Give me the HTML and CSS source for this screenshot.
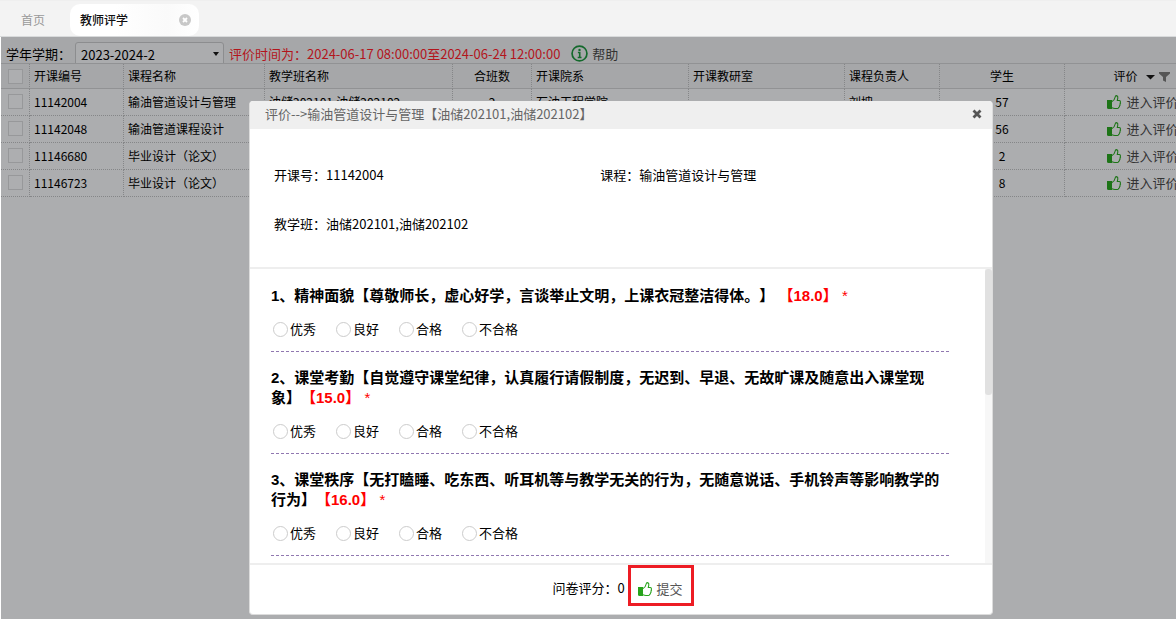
FILE: index.html
```html
<!DOCTYPE html>
<html lang="zh-CN">
<head>
<meta charset="utf-8">
<title>教师评学</title>
<link rel="stylesheet" href="styles.css">
</head>
<body>
<svg class="defs" aria-hidden="true">
  <symbol id="thumb" viewBox="0 0 16 16">
    <path d="M1 6h5v9H2.500Q1 15 1 13.500z" fill="currentColor"/>
    <path d="M6 7.500Q8.500 6.300 9 3.500Q9.300 1.600 10.500 1.600Q12.200 2 11.800 4L11.300 6.500H13.200Q14.700 6.700 14.300 8.300Q14.900 9.300 14 10Q14.400 11.300 13.500 12Q13.500 13.200 12.600 13.600Q12.300 14.500 11.200 14.500H9Q7.500 14.500 6 13.800" fill="none" stroke="currentColor" stroke-width="1.100"/>
  </symbol>
</svg>
<nav class="tabs">
  <a class="tab" href="#">首页</a>
  <a class="tab active" href="#">教师评学
    <svg class="tab-close" viewBox="0 0 12 12"><circle cx="6" cy="6" r="6" fill="#c8c8c8"/><path d="M4 4l4 4M8 4l-4 4" stroke="#fff" stroke-width="1.800"/></svg>
  </a>
</nav>
<main class="page">
  <div class="toolbar">
    <label for="term">学年学期：</label>
    <span class="select-wrap"><select id="term"><option>2023-2024-2</option></select></span>
    <span class="period">评价时间为：2024-06-17 08:00:00至2024-06-24 12:00:00</span>
    <button class="help" type="button">
      <svg viewBox="0 0 16 16"><circle cx="8" cy="8" r="7" fill="none" stroke="currentColor" stroke-width="1.600"/><circle cx="8" cy="4.600" r="1.100" fill="currentColor"/><path d="M6.500 7h1.700v4.600M6.300 11.700h3.600" fill="none" stroke="currentColor" stroke-width="1.500"/></svg>帮助
    </button>
  </div>
  <table class="grid">
    <colgroup><col class="c-check"><col class="c-code"><col class="c-course"><col class="c-class"><col class="c-count"><col class="c-dept"><col class="c-room"><col class="c-owner"><col class="c-student"><col class="c-action"></colgroup>
    <thead>
      <tr><th><input type="checkbox" aria-label="全选"></th><th>开课编号</th><th>课程名称</th><th>教学班名称</th><th class="mid">合班数</th><th>开课院系</th><th>开课教研室</th><th>课程负责人</th><th class="mid">学生</th><th class="mid">评价<svg class="sort" viewBox="0 0 26 12"><path d="M0 4h9L4.500 8.500z" fill="#111"/><path d="M13 1h11v1.500L20 6v5l-3-1.500V6l-4-3.500z" fill="#555"/></svg></th></tr>
    </thead>
    <tbody>
      <tr><td><input type="checkbox" aria-label="选择"></td><td>11142004</td><td>输油管道设计与管理</td><td>油储202101,油储202102</td><td class="mid">2</td><td>石油工程学院</td><td></td><td>刘坤</td><td class="mid">57</td><td class="mid"><button class="rate" type="button"><svg><use href="#thumb"/></svg>进入评价</button></td></tr>
      <tr><td><input type="checkbox" aria-label="选择"></td><td>11142048</td><td>输油管道课程设计</td><td></td><td></td><td></td><td></td><td></td><td class="mid">56</td><td class="mid"><button class="rate" type="button"><svg><use href="#thumb"/></svg>进入评价</button></td></tr>
      <tr><td><input type="checkbox" aria-label="选择"></td><td>11146680</td><td>毕业设计（论文）</td><td></td><td></td><td></td><td></td><td></td><td class="mid">2</td><td class="mid"><button class="rate" type="button"><svg><use href="#thumb"/></svg>进入评价</button></td></tr>
      <tr><td><input type="checkbox" aria-label="选择"></td><td>11146723</td><td>毕业设计（论文）</td><td></td><td></td><td></td><td></td><td></td><td class="mid">8</td><td class="mid"><button class="rate" type="button"><svg><use href="#thumb"/></svg>进入评价</button></td></tr>
    </tbody>
  </table>
</main>

<section class="dialog" role="dialog" aria-labelledby="dlg-title">
  <header class="dialog-head">
    <span id="dlg-title">评价--&gt;输油管道设计与管理【油储202101,油储202102】</span>
    <button class="close" type="button" aria-label="关闭"><svg viewBox="0 0 10 10"><path d="M1.500 1.500l7 7M8.500 1.500l-7 7" stroke="#555" stroke-width="2.800"/></svg></button>
  </header>
  <div class="info">
    <span>开课号：11142004</span>
    <span>课程：输油管道设计与管理</span>
    <span>教学班：油储202101,油储202102</span>
  </div>
  <div class="body">
    <form class="questions">
      <fieldset class="question">
        <legend>1、精神面貌【尊敬师长，虚心好学，言谈举止文明，上课衣冠整洁得体。】 <span class="score">【18.0】</span> <span class="star">*</span></legend>
        <div class="options"><label><input type="radio" name="q1">优秀</label><label><input type="radio" name="q1">良好</label><label><input type="radio" name="q1">合格</label><label><input type="radio" name="q1">不合格</label></div>
      </fieldset>
      <fieldset class="question">
        <legend>2、课堂考勤【自觉遵守课堂纪律，认真履行请假制度，无迟到、早退、无故旷课及随意出入课堂现象】<span class="score">【15.0】</span> <span class="star">*</span></legend>
        <div class="options"><label><input type="radio" name="q2">优秀</label><label><input type="radio" name="q2">良好</label><label><input type="radio" name="q2">合格</label><label><input type="radio" name="q2">不合格</label></div>
      </fieldset>
      <fieldset class="question">
        <legend>3、课堂秩序【无打瞌睡、吃东西、听耳机等与教学无关的行为，无随意说话、手机铃声等影响教学的行为】<span class="score">【16.0】</span> <span class="star">*</span></legend>
        <div class="options"><label><input type="radio" name="q3">优秀</label><label><input type="radio" name="q3">良好</label><label><input type="radio" name="q3">合格</label><label><input type="radio" name="q3">不合格</label></div>
      </fieldset>
    </form>
    <div class="track"><div class="thumb"></div></div>
  </div>
  <footer class="dialog-foot">
    <span class="total">问卷评分：0</span>
    <button class="submit" type="button"><svg><use href="#thumb"/></svg>提交</button>
  </footer>
</section>
</body>
</html>
```
FILE: styles.css
```css
* { box-sizing: border-box; }
body {
  margin: 0;
  height: 100vh;
  display: flex;
  flex-direction: column;
  overflow: hidden;
  background: #fff;
  color: #000;
  font: 13px/20px "Noto Sans CJK SC", sans-serif;
  text-spacing-trim: space-all;
}
button, select, input { font: inherit; color: inherit; margin: 0; }
button { border: 0; padding: 0; background: none; display: inline-flex; align-items: center; }
.defs { position: absolute; width: 0; height: 0; }

.tabs {
  flex: none;
  height: 37px;
  padding-top: 3px;
  display: flex;
  background: #f3f3f3;
  border-top: 1px solid #efefef;
  border-bottom: 1px solid #d8dadb;
  font-size: 12px;
}
.tab {
  height: 32px;
  padding: 0 8px 0 21px;
  width: 70px;
  display: flex;
  align-items: center;
  color: #999;
  text-decoration: none;
}
.tab.active {
  width: 129px;
  padding-left: 10px;
  justify-content: space-between;
  color: #111;
  font-weight: 500;
  border-radius: 10px;
  background: linear-gradient(90deg, #fff 35%, #fafafa 75%, #fff);
}
.tab-close { width: 12px; height: 12px; }

.page { flex: 1; margin-left: 1px; background: #acadaf; overflow: hidden; }
.toolbar {
  height: 27px;
  padding: 5px 0 0 5px;
  display: flex;
  align-items: flex-start;
  line-height: 24px;
  background: #a6a7a9;
  border-bottom: 1px solid #919294;
  overflow: hidden;
}
.toolbar label { width: 69px; }
.select-wrap { position: relative; width: 149px; margin-right: 5px; }
.select-wrap::after {
  content: "";
  position: absolute;
  right: 5px;
  top: 10px;
  border: 3px solid transparent;
  border-top: 4px solid #111;
  border-bottom: 0;
}
select {
  appearance: none;
  width: 100%;
  height: 24px;
  padding: 0 5px 3px;
  border: 1px solid #8c8d8f;
  border-radius: 3px;
  background: #abacae;
  display: block;
}
.period { color: #b3151c; white-space: nowrap; }
.help { height: 24px; margin-left: 11px; padding-bottom: 1px; gap: 4px; color: #333; }
.help svg { width: 17px; height: 17px; color: #14692c; }

.grid { width: 1220px; table-layout: fixed; border-collapse: separate; border-spacing: 0; font-size: 12px; line-height: 16px; }
.c-check { width: 29px; }
.c-code { width: 94px; }
.c-course { width: 141px; }
.c-class { width: 188px; }
.c-count { width: 79px; }
.c-dept { width: 157px; }
.c-room { width: 156px; }
.c-owner { width: 95px; }
.c-student { width: 125px; }
.c-action { width: 156px; }
.grid th, .grid td {
  padding: 0 4px;
  text-align: left;
  font-weight: 400;
  white-space: nowrap;
  border-right: 1px dotted #858688;
  border-bottom: 1px dotted #858688;
}
.grid th { height: 25px; background: #a6a7a9; border-bottom: 1px solid #919294; }
.grid td { height: 27px; padding-bottom: 1px; }
.grid .mid { text-align: center; }
.grid input {
  appearance: none;
  display: block;
  width: 15px;
  height: 15px;
  margin-left: 3px;
  border: 1px solid #97989a;
  background: #adaeb0;
}
.sort { width: 26px; height: 12px; margin-left: 8px; vertical-align: -2px; }
.rate { gap: 4px; color: #333; font-size: 13px; vertical-align: middle; }
.rate svg { width: 16px; height: 16px; color: #1d7417; }

.dialog {
  position: absolute;
  top: 101px;
  right: 183px;
  bottom: 4px;
  left: 249px;
  display: flex;
  flex-direction: column;
  border: 1px solid #dcdcdc;
  border-top: 0;
  border-radius: 4px;
  background: #fff;
  overflow: hidden;
}
.dialog-head {
  flex: none;
  height: 28px;
  padding: 0 10px 2px 15px;
  display: flex;
  align-items: center;
  justify-content: space-between;
  background: #efefef;
  color: #666;
}
.close svg { width: 10px; height: 10px; }
.info {
  flex: none;
  height: 140px;
  padding: 36px 24px;
  display: grid;
  grid-template-columns: 47fr 53fr;
  row-gap: 29px;
  align-content: start;
  border-bottom: 2px solid #eee;
}
.body { flex: 1; min-height: 0; display: flex; padding-left: 21px; }
.questions { flex: 1; min-width: 0; padding-top: 1px; overflow: hidden; }
.question { margin: 0; padding: 16px 0 11px; border: 0; border-bottom: 1px dashed #9078b0; }
.question legend {
  float: left;
  width: 100%;
  padding: 0;
  margin-bottom: 12px;
  font: bold 15px/20px "Liberation Sans", "Noto Sans CJK SC", sans-serif;
}
.score { color: #f00; }
.star { color: #f00; font-weight: 400; }
.options { clear: both; height: 22px; padding-left: 2px; display: flex; align-items: center; gap: 20px; }
.options label { display: flex; align-items: center; gap: 2px; }
.options input { appearance: none; width: 15px; height: 15px; border: 1px solid #ccc; border-radius: 50%; background: #fff; }
.track { width: 7px; margin-left: 36px; background: #f7f7f7; }
.thumb { height: 43%; border-radius: 3px; background: #e1e1e1; }
.dialog-foot {
  flex: none;
  height: 51px;
  padding-left: 4px;
  display: flex;
  align-items: flex-start;
  justify-content: center;
  gap: 3px;
  border-top: 2px solid #eee;
}
.total { padding-top: 13px; }
.submit { width: 66px; height: 41px; padding: 6px 6px 0; gap: 4px; border: 3px solid #ed1c24; color: #555; }
.submit svg { width: 16px; height: 16px; flex: none; color: #27a31c; }
```
